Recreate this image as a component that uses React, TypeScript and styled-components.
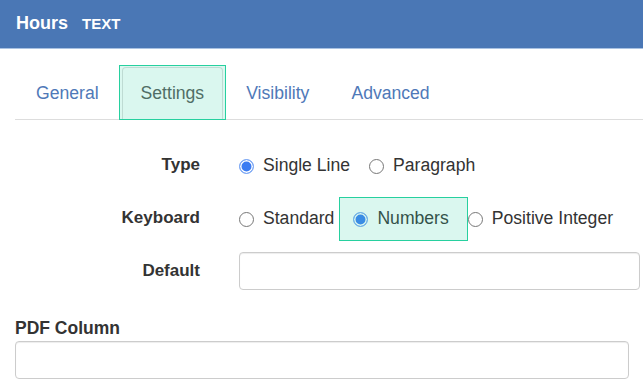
import React from "react";
import styled, { createGlobalStyle } from "styled-components";

const GlobalStyle = createGlobalStyle`
  html, body {
    margin: 0;
    padding: 0;
    background: #fff;
  }
  body {
    font-family: "Liberation Sans", Arial, sans-serif;
    color: #333;
    overflow: hidden;
  }
`;

const Header = styled.div`
  height: 49px;
  box-sizing: border-box;
  padding: 13px 0 0 16px;
  background: #4a77b5;
  border-bottom: 1px solid #a9c2e2;
  display: flex;
  align-items: baseline;
  color: #fff;
  font-weight: bold;
`;

const Title = styled.span`
  font-size: 18px;
  line-height: 20px;
`;

const TypeTag = styled.span`
  font-size: 15px;
  line-height: 20px;
  margin-left: 14px;
`;

const Nav = styled.ul`
  list-style: none;
  display: flex;
  margin: 18px 0 0 15px;
  padding: 0 0 0 2px;
  height: 52px;
  border-bottom: 1px solid #ddd;
`;

const Tab = styled.li<{ $active?: boolean }>`
  position: relative;
  height: 53px;
  box-sizing: border-box;
  margin: 0 4px -1px 0;
  padding: 0 18px;
  display: flex;
  align-items: center;
  font-size: 17.6px;
  color: ${(p) => (p.$active ? "#555" : "#4f79b8")};
  background: ${(p) => (p.$active ? "#fff" : "transparent")};
  border: 1px solid ${(p) => (p.$active ? "#ddd" : "transparent")};
  border-bottom-color: transparent;
  border-radius: 4px 4px 0 0;
  cursor: pointer;
`;

const Marker = styled.span<{ $top: number; $left: number; $right: number; $bottom: number }>`
  position: absolute;
  top: ${(p) => p.$top}px;
  left: ${(p) => p.$left}px;
  right: ${(p) => p.$right}px;
  bottom: ${(p) => p.$bottom}px;
  background: rgba(58, 214, 168, 0.19);
  border: 1.5px solid #27d09f;
  pointer-events: none;
`;

const Form = styled.div`
  display: grid;
  grid-template-columns: 185px 1fr;
  column-gap: 39px;
  row-gap: 15px;
  margin-top: 26px;
  padding: 0 3px 0 15px;
`;

const Label = styled.label`
  min-height: 38px;
  display: flex;
  align-items: center;
  justify-content: flex-end;
  font-weight: bold;
  font-size: 17px;
  color: #333;
`;

const Options = styled.div`
  min-height: 38px;
  display: flex;
  align-items: center;
`;

const Option = styled.label`
  position: relative;
  display: flex;
  align-items: center;
  padding-right: 19px;
  font-size: 17.6px;
  color: #333;
  cursor: pointer;
  line-height: 20px;
`;

const Radio = styled.span<{ $checked?: boolean }>`
  position: relative;
  width: 15px;
  height: 15px;
  box-sizing: border-box;
  margin: 3px 9px 0 0;
  border-radius: 50%;
  border: 1.5px solid ${(p) => (p.$checked ? "#7ea9f4" : "#777")};
  background: ${(p) => (p.$checked ? "#3b7cf2" : "#fff")};
  box-shadow: ${(p) => (p.$checked ? "inset 0 0 0 1.5px #fff" : "none")};
  flex: none;
`;

const TextInput = styled.input`
  display: block;
  width: 100%;
  height: 38px;
  margin: 0;
  box-sizing: border-box;
  border: 1px solid #ccc;
  border-radius: 4px;
  box-shadow: inset 0 1px 1px rgba(0, 0, 0, 0.075);
  padding: 6px 12px;
  font-size: 16px;
  font-family: inherit;
  outline: none;
`;

const Section = styled.div`
  margin-top: 28px;
  padding: 0 14px 0 15px;
`;

const SectionLabel = styled.div`
  font-weight: bold;
  font-size: 17.5px;
  line-height: 20px;
  color: #333;
  margin-bottom: 3px;
`;

const tabs = ["General", "Settings", "Visibility", "Advanced"];

export default function App() {
  return (
    <>
      <GlobalStyle />
      <Header>
        <Title>Hours</Title>
        <TypeTag>TEXT</TypeTag>
      </Header>
      <Nav>
        {tabs.map((t) => (
          <Tab key={t} $active={t === "Settings"}>
            {t}
            {t === "Settings" && <Marker $top={-3} $left={-4} $right={-4} $bottom={-1} />}
          </Tab>
        ))}
      </Nav>
      <Form>
        <Label>Type</Label>
        <Options>
          <Option>
            <Radio $checked />
            Single Line
          </Option>
          <Option>
            <Radio />
            Paragraph
          </Option>
        </Options>
        <Label>Keyboard</Label>
        <Options>
          <Option>
            <Radio />
            Standard
          </Option>
          <Option>
            <Radio $checked />
            Numbers
            <Marker $top={-11} $left={-14} $right={0} $bottom={-13} />
          </Option>
          <Option>
            <Radio />
            Positive Integer
          </Option>
        </Options>
        <Label>Default</Label>
        <TextInput type="text" />
      </Form>
      <Section>
        <SectionLabel>PDF Column</SectionLabel>
        <TextInput type="text" />
      </Section>
    </>
  );
}
